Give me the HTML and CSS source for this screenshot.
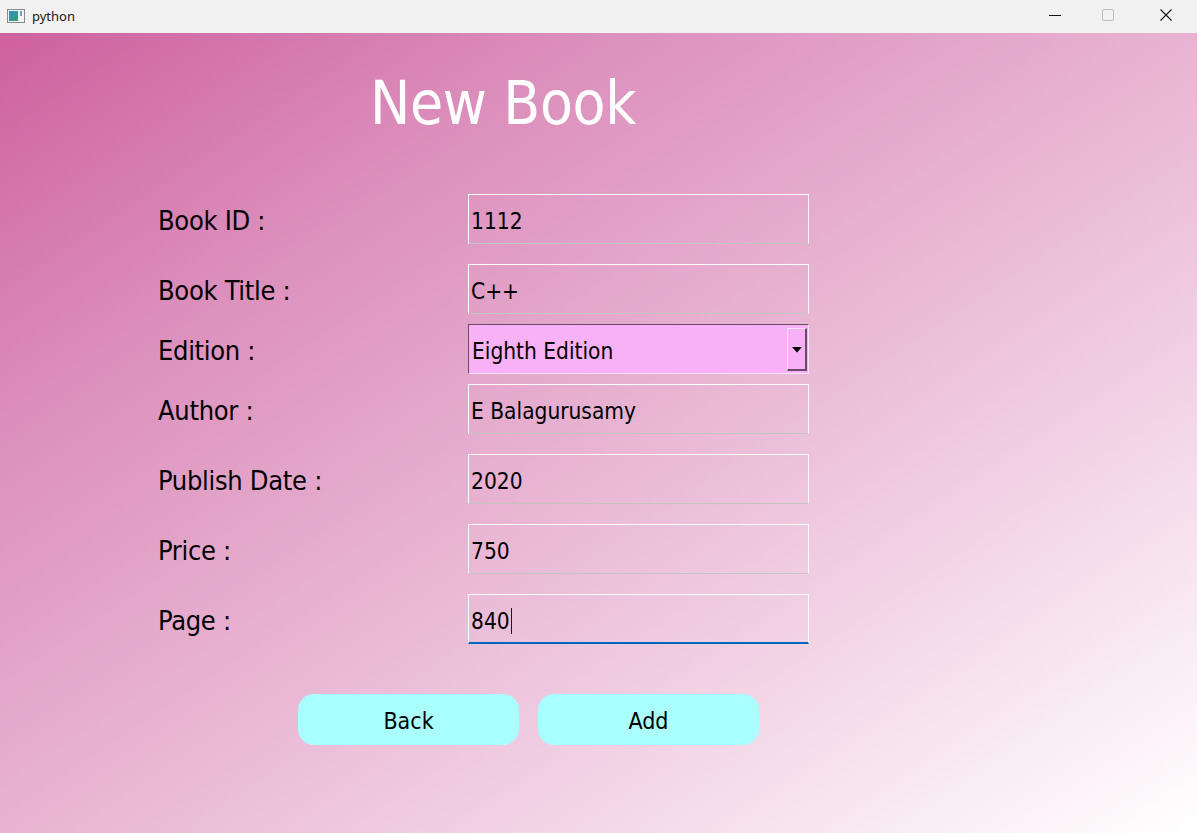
FILE: index.html
```html
<!DOCTYPE html>
<html lang="en">
<head>
<meta charset="utf-8">
<title>python</title>
<link rel="stylesheet" href="styles.css">
</head>
<body>
<div class="window">
  <div class="titlebar">
    <div class="app">
      <svg class="app-icon" width="18" height="14" viewBox="0 0 18 14">
        <defs>
          <linearGradient id="g" x1="0" y1="0" x2="1" y2="1">
            <stop offset="0" stop-color="#2f8fd0"/>
            <stop offset="1" stop-color="#3aa060"/>
          </linearGradient>
        </defs>
        <rect x="0.5" y="0.5" width="17" height="13" fill="#f4f4f4" stroke="#8a8a8a"/>
        <rect x="2" y="2" width="9" height="10" fill="url(#g)"/>
        <rect x="13" y="2" width="2" height="5" fill="#6aa0c0"/>
      </svg>
      <span class="app-name">python</span>
    </div>
    <div class="controls">
      <div class="ctl">
        <svg width="12" height="12" viewBox="0 0 12 12"><line x1="0" y1="6.5" x2="12" y2="6.5" stroke="#111" stroke-width="1"/></svg>
      </div>
      <div class="ctl">
        <svg width="12" height="12" viewBox="0 0 12 12"><rect x="0.5" y="0.5" width="11" height="11" rx="1.5" fill="none" stroke="#bdbdbd" stroke-width="1"/></svg>
      </div>
      <div class="ctl">
        <svg width="12" height="12" viewBox="0 0 12 12"><path d="M0.5 0.5 L11.5 11.5 M11.5 0.5 L0.5 11.5" stroke="#111" stroke-width="1.1" fill="none"/></svg>
      </div>
    </div>
  </div>

  <main class="content">
    <h1 class="heading">New Book</h1>

    <div class="form">
      <div class="row gap-first">
        <label class="label">Book ID :</label>
        <div class="field">1112</div>
      </div>
      <div class="row gap-big">
        <label class="label">Book Title :</label>
        <div class="field">C++</div>
      </div>
      <div class="row gap-small">
        <label class="label">Edition :</label>
        <div class="combo">
          <span class="combo-text">Eighth Edition</span>
          <span class="combo-btn">
            <svg width="10" height="6" viewBox="0 0 10 6"><path d="M0 0 H10 L5 5.5 Z" fill="#000"/></svg>
          </span>
        </div>
      </div>
      <div class="row gap-small">
        <label class="label">Author :</label>
        <div class="field">E Balagurusamy</div>
      </div>
      <div class="row gap-big">
        <label class="label">Publish Date :</label>
        <div class="field">2020</div>
      </div>
      <div class="row gap-big">
        <label class="label">Price :</label>
        <div class="field">750</div>
      </div>
      <div class="row gap-big">
        <label class="label">Page :</label>
        <div class="field focused">840<span class="caret"></span></div>
      </div>
    </div>

    <div class="buttons">
      <button class="btn">Back</button>
      <button class="btn">Add</button>
    </div>
  </main>
</div>
</body>
</html>
```

FILE: styles.css
```css
* { box-sizing: border-box; }

html, body {
  margin: 0;
  padding: 0;
  width: 1197px;
  height: 833px;
  overflow: hidden;
}

body {
  font-family: "DejaVu Sans Condensed", "DejaVu Sans", "Liberation Sans", sans-serif;
}

.window {
  display: flex;
  flex-direction: column;
  width: 1197px;
  height: 833px;
}

.titlebar {
  height: 33px;
  flex: 0 0 33px;
  background: #f1f1f1;
  display: flex;
  align-items: center;
  justify-content: space-between;
}

.app {
  display: flex;
  align-items: center;
  padding-left: 7px;
  gap: 7px;
}

.app-icon { display: block; margin-top: -1px; }

.app-name {
  font-family: "Noto Sans", "Liberation Sans", sans-serif;
  font-size: 13px;
  color: #1a1a1a;
  margin-top: -2px;
}

.controls {
  display: flex;
  height: 33px;
}

.ctl {
  width: 58px;
  height: 33px;
  display: flex;
  align-items: center;
  justify-content: center;
  padding-bottom: 3px;
}
.ctl:first-child { width: 48px; }
.ctl:last-child { width: 60px; padding-right: 2px; }

.content {
  flex: 1;
  background: linear-gradient(to bottom right, #ce619e 0%, #dc8fbc 25%, #e8b3d2 50%, #f2d4e5 72%, #ffffff 100%);
  padding-top: 40px;
}

.heading {
  margin: 0 0 0 370px;
  font-weight: normal;
  font-size: 60px;
  line-height: 60px;
  height: 60px;
  color: #ffffff;
  letter-spacing: -0.4px;
}

.form {
  display: flex;
  flex-direction: column;
  padding-left: 158px;
}

.row {
  display: grid;
  grid-template-columns: 310px 341px;
  grid-template-rows: 50px;
  align-items: center;
  height: 50px;
}
.gap-first { margin-top: 61px; }
.gap-big { margin-top: 20px; }
.gap-small { margin-top: 10px; }

.label {
  font-size: 27px;
  color: #000;
  line-height: 47px;
  padding-top: 3px;
  letter-spacing: -0.3px;
}

.field {
  height: 50px;
  border: 1px solid #fcfcfc;
  border-bottom-color: #c4c4c4;
  padding-left: 2px;
  padding-top: 4px;
  font-size: 22.5px;
  color: #000;
  display: flex;
  align-items: center;
}

.field.focused {
  border-bottom: 2px solid #0067c0;
}

.caret {
  display: inline-block;
  width: 1px;
  height: 26px;
  background: #102010;
  margin-left: 1px;
}

.combo {
  height: 50px;
  background: #f8b0f6;
  border-top: 1px solid #6b4a68;
  border-left: 1px solid #6b4a68;
  border-right: 1px solid #fbe3f7;
  border-bottom: 1px solid #fbe3f7;
  display: flex;
  align-items: stretch;
  padding: 1px 1px 2px 3px;
}

.combo-text {
  flex: 1;
  font-size: 22.5px;
  color: #000;
  display: flex;
  align-items: center;
  padding-top: 4px;
}

.combo-btn {
  width: 20px;
  margin-top: 2px;
  background: #f8b0f6;
  border-top: 1px solid #fbe3f7;
  border-left: 1px solid #fbe3f7;
  border-right: 2px solid #6b4a68;
  border-bottom: 2px solid #6b4a68;
  display: flex;
  align-items: center;
  justify-content: center;
  padding-top: 1px;
}
.combo-btn svg { display: block; }

.buttons {
  display: flex;
  gap: 19px;
  padding-left: 298px;
  margin-top: 50px;
}

.btn {
  width: 221px;
  height: 51px;
  border: none;
  border-radius: 16px;
  background: #aaffff;
  font-family: inherit;
  font-size: 23px;
  color: #000;
  padding: 3px 0 0 0;
}
```
